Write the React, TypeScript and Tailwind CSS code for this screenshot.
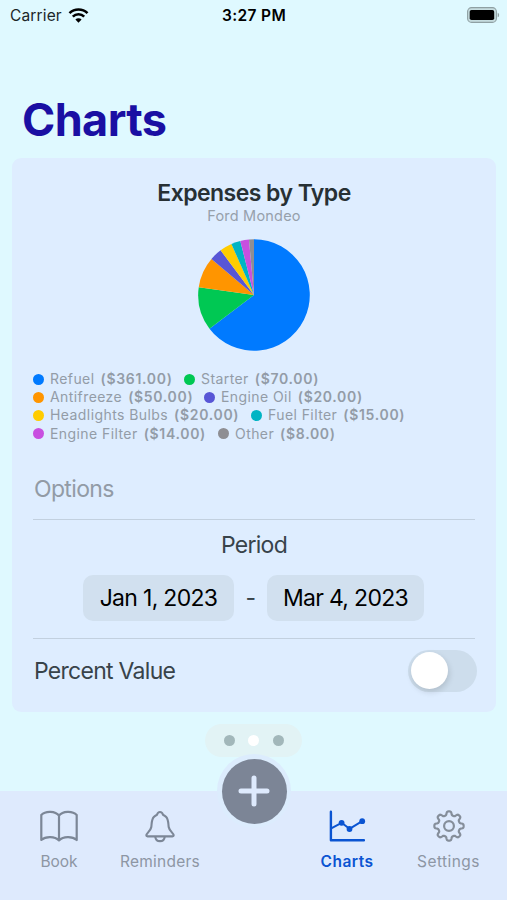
import { useState } from 'react'

interface Expense {
    name: string; amount: number; color: string; width: string
}

// One array per legend line
const legendRows: Expense[][] = [
    [
        { name: 'Refuel', amount: 361, color: '#007aff', width: 'w-[151px]' },
        { name: 'Starter', amount: 70, color: '#00c853', width: 'w-[150px]' },
    ],
    [
        { name: 'Antifreeze', amount: 50, color: '#ff9500', width: 'w-[171px]' },
        { name: 'Engine Oil', amount: 20, color: '#5856d6', width: 'w-[170px]' },
    ],
    [
        { name: 'Headlights Bulbs', amount: 20, color: '#ffcc00', width: 'w-[218px]' },
        { name: 'Fuel Filter', amount: 15, color: '#00b4c4', width: 'w-[170px]' },
    ],
    [
        { name: 'Engine Filter', amount: 14, color: '#c84fe0', width: 'w-[185px]' },
        { name: 'Other', amount: 8, color: '#8e8e93', width: 'w-[150px]' },
    ],
]

const expenses = legendRows.flat()

function pieSlices(items: Expense[], r: number) {
    const total = items.reduce((sum, e) => sum + e.amount, 0)
    let angle = 0
    return items.map(e => {
        const start = angle
        angle += (e.amount / total) * Math.PI * 2
        const large = angle - start > Math.PI ? 1 : 0
        const d = `M0 0 L${r * Math.sin(start)} ${-r * Math.cos(start)} A${r} ${r} 0 ${large} 1 ${r * Math.sin(angle)} ${-r * Math.cos(angle)} Z`
        return { name: e.name, color: e.color, d }
    })
}

// Eight-tooth gear outline around 0,0
function gearPath() {
    const points: string[] = []
    for (let i = 0; i < 192; i++) {
        const a = (i / 192) * Math.PI * 2
        const r = 12.8 + 1.9 * Math.tanh(2 * Math.cos(8 * a))
        points.push(`${(r * Math.sin(a)).toFixed(2)} ${(-r * Math.cos(a)).toFixed(2)}`)
    }
    return `M${points.join('L')}Z`
}

function StatusBar() {
    return (
        <div className="h-[31px] pl-[10px] pr-[7px] flex items-center text-[15.5px] text-black">
            <div className="w-[212px] flex items-center gap-[6px]">
                <span className="tracking-[0.15px] text-[#1c2629]">Carrier</span>
                <svg className="-mt-px" width="21" height="15" viewBox="0 0 20 15" fill="none" stroke="black" strokeWidth="2.6">
                    <path d="M1 5.2a12.8 12.8 0 0 1 18 0" />
                    <path d="M4.3 8.6a8.1 8.1 0 0 1 11.4 0" />
                    <path d="M10 14.8 6.9 11.5a4.4 4.4 0 0 1 6.2 0z" fill="black" stroke="none" />
                </svg>
            </div>
            <span className="font-semibold tracking-[0.35px]">3:27 PM</span>
            <svg className="ml-auto -mt-[2px]" width="33" height="16" viewBox="0 0 33 16">
                <rect x="0.6" y="0.6" width="28.8" height="14.8" rx="4" fill="#c6dcdf" stroke="#8fa0a3" strokeWidth="1.1" />
                <rect x="2.7" y="3" width="24.5" height="10" rx="1.8" fill="black" />
                <path d="M30.7 5.7c1.9.7 1.9 3.9 0 4.6z" fill="#8fa0a3" />
            </svg>
        </div>
    )
}

function Legend() {
    return (
        <div className="mt-[18px] text-[14px] leading-[18.2px] text-[#939ca7]">
            {legendRows.map(row => (
                <div key={row[0].name} className="flex">
                    {row.map(e => (
                        <div key={e.name} className={`flex items-center whitespace-nowrap ${e.width}`}>
                            <span className="w-[11px] h-[11px] rounded-full mr-[6px]" style={{ background: e.color }} />
                            <span className="tracking-[0.42px]">{e.name}</span>
                            <span className="ml-[6px] font-semibold tracking-[0.68px]">(${e.amount.toFixed(2)})</span>
                        </div>
                    ))}
                </div>
            ))}
        </div>
    )
}

function TabBar() {
    return (
        <nav className="relative h-[109px] bg-[#deeafd] flex text-[15.5px] text-[#8d96a4]">
            <div className="w-[118px] pt-[17px] flex flex-col items-center">
                <svg width="40" height="36" viewBox="0 0 40 36" fill="none" stroke="#7c8797" strokeWidth="2.2" strokeLinejoin="round">
                    <path d="M20 7.5C16.5 3 6.5 2.4 2.3 7v25c4.5-4 13.5-3.7 17.7.4 4.200-4.100 13.200-4.400 17.700-.4V7C33.500 2.400 23.500 3 20 7.500zM20 7.500v25" />
                </svg>
                <span className="leading-[20px] mt-[8px]">Book</span>
            </div>
            <div className="w-[84px] pt-[17px] flex flex-col items-center">
                <svg width="32" height="36" viewBox="0 0 32 36" fill="none" stroke="#7c8797" strokeWidth="2.1" strokeLinejoin="round">
                    <path d="M2.300 27.300c0-2 4.400-4.300 5-8.300.5-3.700.2-7.400 2.500-10 1.200-1.300 2-1.700 3.200-2.300 1-3.700 5-3.700 6 0 1.200.6 2 1 3.200 2.300 2.300 2.600 2 6.300 2.500 10 .6 4 5 6.300 5 8.300 0 .8-.5 1.100-1.300 1.100H3.600c-.8 0-1.300-.3-1.300-1.100z" />
                    <path d="M11.300 28.800c.6 5.700 8.800 5.700 9.400 0" />
                </svg>
                <span className="leading-[20px] mt-[8px] tracking-[0.25px]">Reminders</span>
            </div>
            <div className="w-[104px]" />
            <div className="w-[82px] pt-[17px] flex flex-col items-center text-[#0a54d2]">
                <svg width="38" height="36" viewBox="0 0 38 36" fill="none" stroke="currentColor" strokeWidth="2.4" strokeLinecap="round" strokeLinejoin="round">
                    <path d="M2.900 3.700v28.500h33" />
                    <path d="M3.200 20.300 13.600 14.800l7.900 6 12.700-7.600" strokeWidth="2" />
                    <g fill="currentColor" stroke="none">
                        <circle cx="13.6" cy="14.8" r="2.9" />
                        <circle cx="21.5" cy="21" r="2.9" />
                        <circle cx="34.2" cy="13.2" r="2.9" />
                    </g>
                </svg>
                <span className="leading-[20px] mt-[8px] font-semibold tracking-[0.45px]">Charts</span>
            </div>
            <div className="w-[119px] pl-[2px] pt-[17px] flex flex-col items-center">
                <svg width="36" height="36" viewBox="-18 -18 36 36" fill="none" stroke="#858e9a" strokeWidth="2.2" strokeLinejoin="round">
                    <path d={gearPath()} />
                    <circle r="4.9" />
                </svg>
                <span className="leading-[20px] mt-[8px] tracking-[0.45px]">Settings</span>
            </div>

            {/* Floating add button */}
            <button className="absolute left-[217px] -top-[37px] w-[74px] h-[74px] rounded-full bg-[#dcecfd] flex items-center justify-center">
                <span className="w-[65px] h-[65px] rounded-full bg-[#7c8596] flex items-center justify-center">
                    <svg width="32" height="32" viewBox="0 0 32 32" stroke="#deeafd" strokeWidth="5" strokeLinecap="round">
                        <path d="M16 3v26M3 16h26" />
                    </svg>
                </span>
            </button>
        </nav>
    )
}

export default function App() {
    const [percent, setPercent] = useState(false)

    return (
        <div className="w-[507px] h-[900px] overflow-hidden flex flex-col bg-[#dff9ff] font-['Inter','Liberation_Sans',sans-serif]">
            <StatusBar />
            <h1 className="mt-[61px] ml-[22px] h-[56px] leading-[56px] text-[45px] font-bold tracking-[-0.6px] text-[#1a0fa3]">Charts</h1>

            {/* Chart card */}
            <main className="mt-[10px] ml-[12px] w-[484px] h-[554px] rounded-[9px] bg-[#deedff] pl-[21px] pr-[21px] flex flex-col">
                <h2 className="mt-[21px] text-center text-[23px] leading-[28px] font-semibold tracking-[-0.55px] text-[#273034]">Expenses by Type</h2>
                <p className="text-center text-[14.5px] leading-[18px] text-[#96a0ab] tracking-[0.2px]">Ford Mondeo</p>
                <svg className="mt-[13px] self-center shrink-0" width="114" height="114" viewBox="-57 -57 114 114">
                    {pieSlices(expenses, 55.8).map(s => <path key={s.name} d={s.d} fill={s.color} />)}
                </svg>
                <Legend />

                <p className="mt-[31px] ml-px text-[23px] leading-[30px] tracking-[-0.65px] text-[#929ba6]">Options</p>
                <div className="mt-[15px] h-px bg-[#c2d0df]" />
                <p className="mt-[10px] text-center text-[23px] leading-[30px] tracking-[-0.75px] text-[#38434a]">Period</p>
                <div className="mt-[15px] -ml-px flex items-center justify-center text-[23px] tracking-[-0.7px] text-black">
                    <button className="w-[151px] h-[46px] rounded-[10px] bg-[#d1e0ef]">Jan 1, 2023</button>
                    <span className="w-[33px] text-center text-[#38434a]">-</span>
                    <button className="w-[157px] h-[46px] rounded-[10px] bg-[#d1e0ef]">Mar 4, 2023</button>
                </div>
                <div className="mt-[17px] h-px bg-[#c2d0df]" />
                <div className="mt-[11px] flex items-center justify-between text-[23px] tracking-[-0.72px] text-[#38434a]">
                    <span className="ml-px">Percent Value</span>
                    <button
                        onClick={() => setPercent(!percent)}
                        className={`w-[69px] h-[42px] p-[2.5px] rounded-full flex items-center -mr-[2px] ${percent ? 'bg-[#34c759] justify-end' : 'bg-[#cdddec] justify-start'}`}
                    >
                        <span className="w-[37px] h-[37px] rounded-full bg-white shadow-[1px_3px_6px_rgba(0,0,0,0.14)]" />
                    </button>
                </div>
            </main>

            {/* Page indicator */}
            <div className="mt-[12px] mb-auto self-center w-[97px] h-[33px] rounded-full bg-[#e2f3f5] flex items-center justify-center gap-[13.5px]">
                <span className="w-[11px] h-[11px] rounded-full bg-[#a2b7ba]" />
                <span className="w-[11px] h-[11px] rounded-full bg-white" />
                <span className="w-[11px] h-[11px] rounded-full bg-[#a2b7ba]" />
            </div>

            <TabBar />
        </div>
    )
}
